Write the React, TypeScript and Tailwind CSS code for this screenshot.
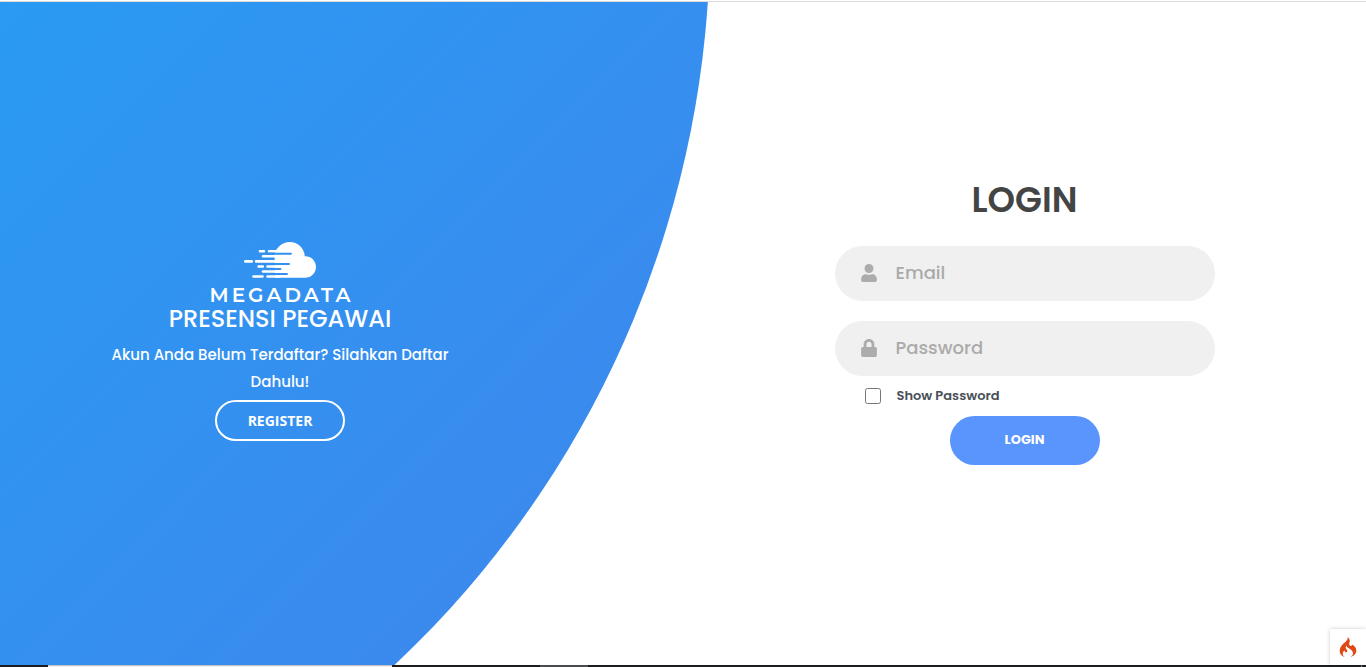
import { useState } from "react";
import { FaLock, FaUser } from "react-icons/fa";
import { SiCodeigniter } from "react-icons/si";

function CloudLogo() {
  return (
    <svg viewBox="0 0 74 38" className="h-[38px] w-[74px]" role="img" aria-label="Megadata" fill="none">
      <path
        d="M31.500 13C33.500 6 39.500 1 46.500 1C55 1 61.300 7 61.800 15.300C68 15 73 19.800 73 25.800C73 32 68.300 36.800 62 36.800H32Z"
        fill="#fff"
      />
      <g stroke="#fff" strokeWidth="2.600" strokeLinecap="round">
        <path d="M17 10.300h4M26 10.300h10M20 15.300h14M2.300 20.400h6.400M13 20.400h20M15.600 25.500h4.200M24.500 25.500h10M20 30.500h14M10.500 35.500h9M24.500 35.500h12" />
      </g>
      <path
        d="M24 12.800H48M20 17.900H30.500M12 23H46M24 28H37.500M20 33H44"
        stroke="#3390f0"
        strokeWidth="1.900"
        strokeLinecap="round"
      />
    </svg>
  );
}

export default function App() {
  const [show, setShow] = useState(false);

  return (
    <div className="flex h-screen flex-col bg-white font-[Poppins,Inter,sans-serif]">
      <div className="h-0.5 shrink-0 border-b border-[#dadce0] bg-white" />
      <main className="relative isolate flex min-h-0 flex-1 justify-between overflow-hidden">
        <div className="absolute top-[-10%] right-[48%] -z-10 size-[2000px] -translate-y-1/2 rounded-full bg-[linear-gradient(-45deg,#4481eb_0%,#04befe_100%)]" />

        <section className="flex w-[41%] flex-col items-center justify-center pt-[15px] text-center text-white">
          <CloudLogo />
          <p className="mt-1 pl-[3px] font-[Montserrat,Poppins,Inter,sans-serif] text-xl leading-6 font-semibold tracking-[3px]">
            MEGADATA
          </p>
          <h2 className="text-2xl leading-6 font-medium">PRESENSI PEGAWAI</h2>
          <p className="mt-2.5 max-w-[352px] text-[15px] leading-[27px] font-medium">
            Akun Anda Belum Terdaftar? Silahkan Daftar Dahulu!
          </p>
          <button
            type="button"
            className="mt-[5px] h-[41px] w-[130px] rounded-full border-2 border-white font-['Open_Sans',sans-serif] text-sm font-bold"
          >
            REGISTER
          </button>
        </section>

        <section className="flex w-1/2 items-center justify-center pb-[30px]">
          <form className="flex w-[380px] flex-col items-center" onSubmit={(e) => e.preventDefault()}>
            <h1 className="mb-5 text-[35px] leading-[53px] font-semibold text-[#444]">LOGIN</h1>
            <label className="mb-5 flex h-[55px] w-full items-center rounded-full bg-[#f0f0f0]">
              <span className="flex w-[61px] justify-center pl-2">
                <FaUser className="size-[18px] text-[#acacac]" />
              </span>
              <input
                type="email"
                aria-label="Email"
                placeholder="Email"
                className="min-w-0 flex-1 bg-transparent pr-6 text-lg font-medium text-[#333] outline-none placeholder:text-[#aaa]"
              />
            </label>
            <label className="flex h-[55px] w-full items-center rounded-full bg-[#f0f0f0]">
              <span className="flex w-[61px] justify-center pl-2">
                <FaLock className="size-[18px] text-[#acacac]" />
              </span>
              <input
                type={show ? "text" : "password"}
                aria-label="Password"
                placeholder="Password"
                className="min-w-0 flex-1 bg-transparent pr-6 text-lg font-medium text-[#333] outline-none placeholder:text-[#aaa]"
              />
            </label>
            <label className="flex h-10 w-full items-center gap-4 pl-[30px] text-[13px] font-semibold text-[#495057]">
              <input
                type="checkbox"
                checked={show}
                onChange={(e) => setShow(e.target.checked)}
                className="size-4"
              />
              Show Password
            </label>
            <button type="submit" className="h-[49px] w-[150px] rounded-full bg-[#5995fd] text-[13px] font-bold text-white">
              LOGIN
            </button>
          </form>
        </section>

        <a
          href="#debug"
          aria-label="Debug toolbar"
          className="absolute right-0 bottom-0 flex h-9 w-9 items-center justify-center bg-white shadow-[0_0_4px_#cccccc]"
        >
          <SiCodeigniter className="size-5 text-[#dd4814]" />
        </a>
      </main>
      <div className="flex h-0.5 shrink-0 bg-[#1c1d1f]">
        <div className="w-12" />
        <div className="w-[344px] border-t border-[#c4c4c4] bg-[#f0f0f0]" />
        <div className="w-[148px]" />
        <div className="w-12 bg-[#4b4c4e]" />
        <div className="mr-1 ml-auto w-px bg-[#77787a]" />
      </div>
    </div>
  );
}
